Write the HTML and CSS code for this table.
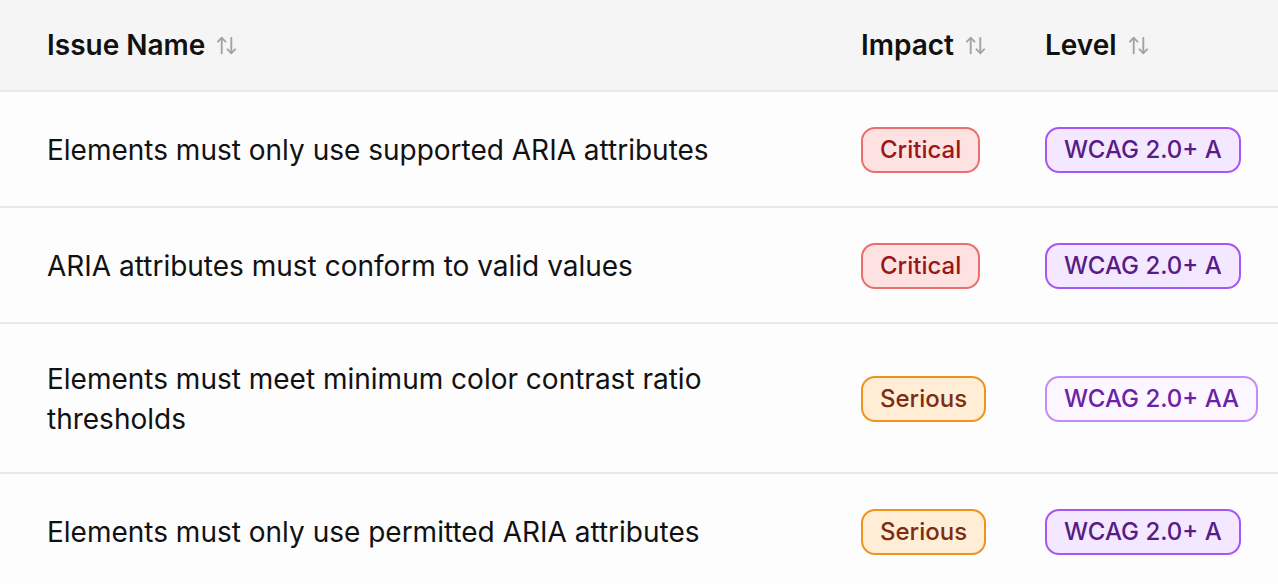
FILE: index.html
```html
<!DOCTYPE html>
<html lang="en">
<head>
<meta charset="utf-8">
<title>Issues</title>
<link rel="stylesheet" href="styles.css">
</head>
<body>
<div class="table">
  <div class="row head">
    <div class="cell name"><span class="hlabel">Issue Name</span><svg class="sort" viewBox="0 0 24 24"><path d="m21 16-4 4-4-4"/><path d="M17 20V4"/><path d="m3 8 4-4 4 4"/><path d="M7 4v16"/></svg></div>
    <div class="cell"><span class="hlabel">Impact</span><svg class="sort" viewBox="0 0 24 24"><path d="m21 16-4 4-4-4"/><path d="M17 20V4"/><path d="m3 8 4-4 4 4"/><path d="M7 4v16"/></svg></div>
    <div class="cell"><span class="hlabel">Level</span><svg class="sort" viewBox="0 0 24 24"><path d="m21 16-4 4-4-4"/><path d="M17 20V4"/><path d="m3 8 4-4 4 4"/><path d="M7 4v16"/></svg></div>
  </div>
  <div class="row">
    <div class="cell name">Elements must only use supported ARIA attributes</div>
    <div class="cell"><span class="badge critical">Critical</span></div>
    <div class="cell"><span class="badge level-a">WCAG 2.0+ A</span></div>
  </div>
  <div class="row">
    <div class="cell name">ARIA attributes must conform to valid values</div>
    <div class="cell"><span class="badge critical">Critical</span></div>
    <div class="cell"><span class="badge level-a">WCAG 2.0+ A</span></div>
  </div>
  <div class="row">
    <div class="cell name">Elements must meet minimum color contrast ratio thresholds</div>
    <div class="cell"><span class="badge serious">Serious</span></div>
    <div class="cell"><span class="badge level-aa">WCAG 2.0+ AA</span></div>
  </div>
  <div class="row">
    <div class="cell name">Elements must only use permitted ARIA attributes</div>
    <div class="cell"><span class="badge serious">Serious</span></div>
    <div class="cell"><span class="badge level-a">WCAG 2.0+ A</span></div>
  </div>
</div>
</body>
</html>
```

FILE: styles.css
```css
html, body {
  margin: 0;
  padding: 0;
  background: #fdfdfd;
}
body {
  font-family: Inter, "Noto Sans", sans-serif;
  color: #111111;
  font-size: 28px;
  line-height: 40px;
}
.table {
  width: 1300px;
}
.row {
  display: grid;
  grid-template-columns: 861px 184px 1fr;
  border-bottom: 2px solid #e9e9e9;
}
.row.head {
  background: #f5f5f5;
  height: 90px;
}
.cell {
  display: flex;
  align-items: center;
  padding: 35px 0 33px;
}
.cell.name {
  padding-left: 47px;
  padding-right: 47px;
}
.head .cell {
  padding-top: 0;
  padding-bottom: 0;
  gap: 10px;
}
.hlabel {
  font-weight: 600;
}
.sort {
  width: 23px;
  height: 23px;
  fill: none;
  stroke: #a3a3a3;
  stroke-width: 2;
  stroke-linecap: round;
  stroke-linejoin: round;
}
.badge {
  display: inline-block;
  font-size: 24px;
  line-height: 30px;
  font-weight: 500;
  padding: 6px 17px;
  border: 2px solid;
  border-radius: 14px;
}
.critical {
  background: #fee2e2;
  border-color: #ea7070;
  color: #9b1616;
}
.serious {
  background: #ffedd5;
  border-color: #f0921e;
  color: #7c2d12;
}
.level-a {
  background: #f3e8ff;
  border-color: #a855f7;
  color: #581c87;
}
.level-aa {
  background: #fbf6ff;
  border-color: #c58cf8;
  color: #6b21a8;
}
```
